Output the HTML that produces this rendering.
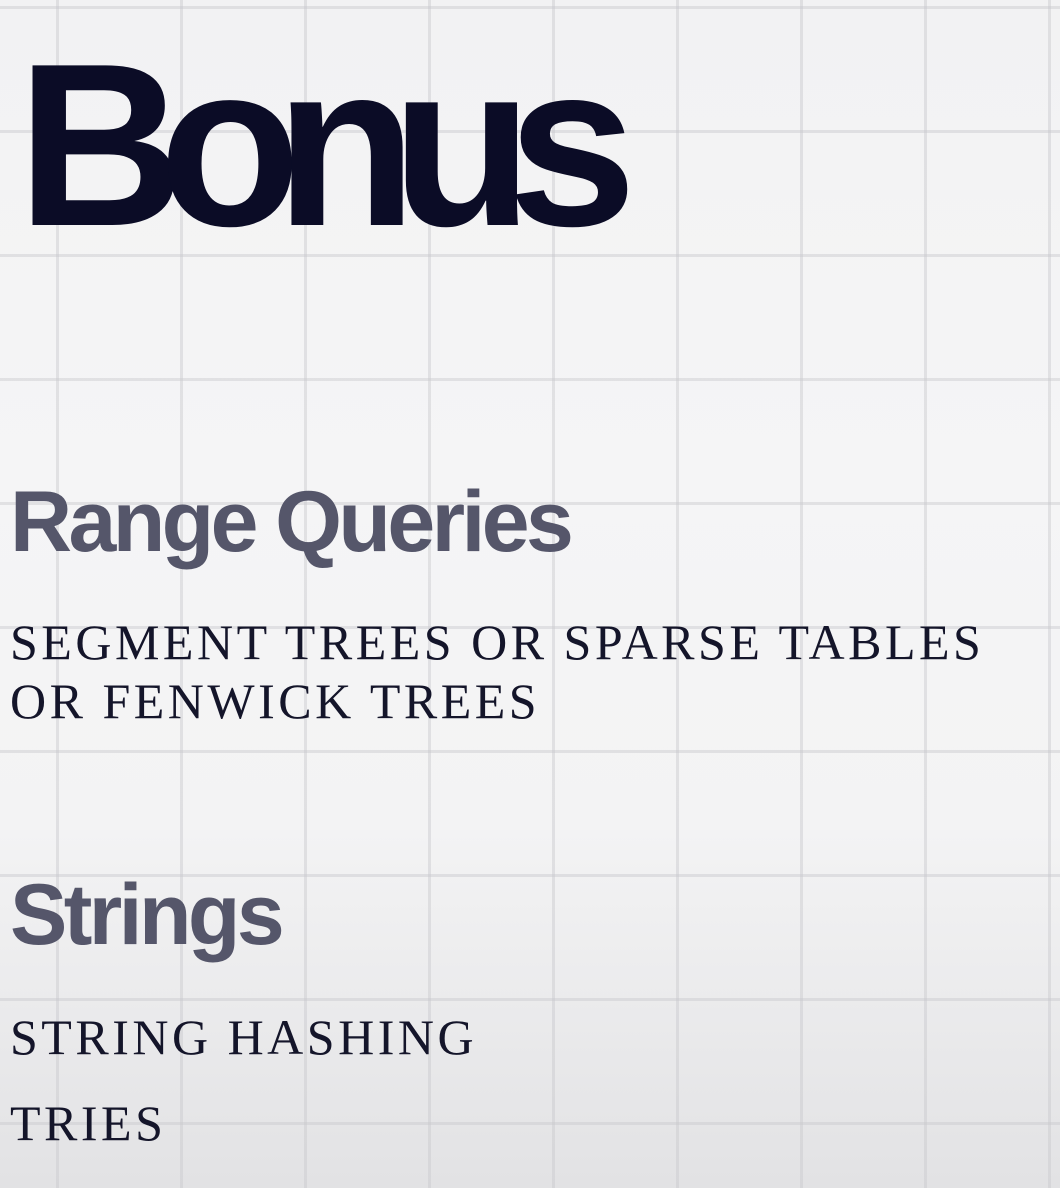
<!DOCTYPE html>
<html><head><meta charset="utf-8"><style>
html,body{margin:0;padding:0}
body{width:1060px;height:1188px;position:relative;overflow:hidden;
background:linear-gradient(#f2f2f3 0%,#f5f5f6 40%,#f3f3f4 70%,#e2e2e4 100%);}
.grid{position:absolute;inset:0;
background-image:linear-gradient(90deg,rgba(200,200,204,.45) 3px,transparent 3px),linear-gradient(rgba(200,200,204,.45) 3px,transparent 3px);
background-size:124px 124px;background-position:56px 6px;}
.t{position:absolute;white-space:nowrap;line-height:1;margin:0}
.h1{font-family:"Liberation Sans",sans-serif;font-weight:bold;font-size:232px;letter-spacing:-25.5px;color:#0b0c26;left:17px;top:30px}
.h2{font-family:"Liberation Sans",sans-serif;font-weight:bold;font-size:86px;letter-spacing:-3.6px;color:#55566a;left:10px}
.s{font-family:"Liberation Serif",serif;font-size:50px;letter-spacing:3.5px;color:#14152a;left:10px}
</style></head><body>
<div class="grid"></div>
<div class="t h1">Bonus</div>
<div class="t h2" style="top:479px">Range Queries</div>
<div class="t s" style="top:617px">SEGMENT TREES OR SPARSE TABLES</div>
<div class="t s" style="top:676px">OR FENWICK TREES</div>
<div class="t h2" style="top:872px">Strings</div>
<div class="t s" style="top:1012px">STRING HASHING</div>
<div class="t s" style="top:1098px">TRIES</div>
</body></html>
